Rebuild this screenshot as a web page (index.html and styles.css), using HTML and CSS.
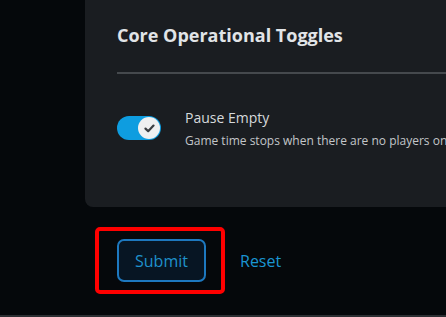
FILE: index.html
```html
<!DOCTYPE html>
<html lang="en">
<head>
    <meta charset="UTF-8">
    <title>Server Settings</title>
    <link rel="stylesheet" href="styles.css">
</head>
<body>

<div class="page">
    <div class="card">
        <h2 class="card-title">Core Operational Toggles</h2>
        <hr class="divider">

        <div class="setting">
            <span class="toggle on">
                <span class="knob">
                    <svg width="11" height="9" viewBox="0 0 11 9">
                        <path d="M1.5 4.6 L4.2 7.2 L9.5 1.6" fill="none" stroke="#3b3e42" stroke-width="2.2"
                              stroke-linecap="round" stroke-linejoin="round"/>
                    </svg>
                </span>
            </span>
            <div class="setting-text">
                <div class="setting-name">Pause Empty</div>
                <div class="setting-desc">Game time stops when there are no players online</div>
            </div>
        </div>
    </div>

    <div class="actions">
        <div class="highlight">
            <button class="btn-submit">Submit</button>
        </div>
        <button class="btn-reset">Reset</button>
    </div>
</div>

<div class="bottom-edge"></div>

</body>
</html>
```

FILE: styles.css
```css
html, body {
    margin: 0;
    height: 100%;
    overflow: hidden;
}

body {
    background: #05080b;
    font-family: "Open Sans", "Noto Sans", sans-serif;
    position: relative;
}

.page {
    padding-left: 85px;
}

.card {
    width: 420px;
    height: 207px;
    box-sizing: border-box;
    background: #1a1d21;
    border-radius: 0 0 0 8px;
    padding: 20px 0 0 32px;
}

.card-title {
    margin: 0;
    font-size: 18px;
    font-weight: 700;
    line-height: 30px;
    color: #e1e4e7;
}

.divider {
    border: 0;
    height: 2px;
    background: #45494d;
    margin: 22px 0 0 0;
}

.setting {
    display: flex;
    align-items: flex-start;
    margin-top: 34px;
}

.toggle {
    flex: none;
    position: relative;
    width: 44px;
    height: 24px;
    border-radius: 12px;
    background: #0e9de0;
    margin-top: 8px;
}

.toggle .knob {
    position: absolute;
    top: 1px;
    right: 1px;
    width: 22px;
    height: 22px;
    border-radius: 50%;
    background: #eff0f1;
    display: flex;
    align-items: center;
    justify-content: center;
}

.setting-text {
    margin-left: 24px;
    white-space: nowrap;
}

.setting-name {
    font-size: 14px;
    line-height: 20px;
    color: #d6d9dc;
}

.setting-desc {
    margin-top: 5px;
    font-size: 12px;
    line-height: 16px;
    color: #c3c6c9;
}

.actions {
    display: flex;
    align-items: center;
    margin-top: 20px;
    margin-left: 10px;
}

.highlight {
    border: 4px solid #ff0000;
    border-radius: 5px;
    padding: 8px 15px 8px 18px;
}

.btn-submit {
    display: block;
    width: 89px;
    height: 43px;
    box-sizing: border-box;
    background: #071523;
    border: 2px solid #1d78bf;
    border-radius: 7px;
    font-family: inherit;
    font-size: 16px;
    color: #1f91cc;
    padding: 0;
}

.btn-reset {
    background: none;
    border: 0;
    padding: 0;
    margin-left: 15px;
    font-family: inherit;
    font-size: 16px;
    color: #1a95d2;
}

.bottom-edge {
    position: absolute;
    left: 0;
    right: 0;
    bottom: 0;
    height: 2px;
    background: #2c2f33;
}
```
